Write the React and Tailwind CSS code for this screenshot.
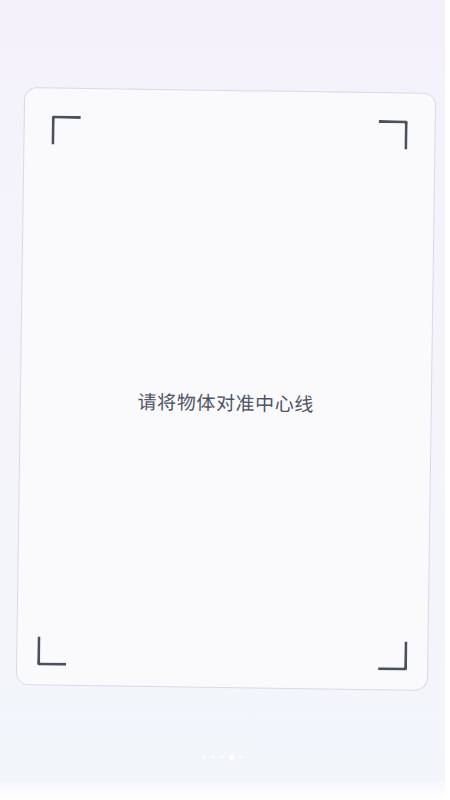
export default function App() {
  return (
    <div className="relative w-[450px] h-[800px] overflow-hidden bg-gradient-to-b from-[#f4f1fb] via-[#f5f4fb] to-[#f2f6fb] font-['Noto_Sans_CJK_SC','Noto_Sans',sans-serif]">
      <div className="flex flex-col h-full pr-[5px]">
        <div className="h-[90px]" />
        <div className="ml-[20px] w-[412px] h-[598px] rotate-[0.8deg] rounded-[13px] border border-[#d8dae6] bg-[#fafafd] flex flex-col">
          <div className="flex justify-between px-[27px] pt-[27px]">
            <div className="w-[29px] h-[29px] border-l-[3px] border-t-[3px] border-[#4b505d] rounded-tl-[3px]" />
            <div className="w-[29px] h-[29px] border-r-[3px] border-t-[3px] border-[#4b505d] rounded-tr-[3px]" />
          </div>
          <div className="flex-1 flex items-center justify-center pt-[16px]">
            <span className="text-[19px] leading-none text-[#4f5464] tracking-[0.6px]">请将物体对准中心线</span>
          </div>
          <div className="flex justify-between px-[20px] pb-[19px]">
            <div className="w-[29px] h-[29px] border-l-[3px] border-b-[3px] border-[#4b505d] rounded-bl-[3px]" />
            <div className="w-[29px] h-[29px] border-r-[3px] border-b-[3px] border-[#4b505d] rounded-br-[3px]" />
          </div>
        </div>
        <div className="flex-1 flex items-center justify-center gap-[5px] pt-[44px]">
          <span className="w-[4px] h-[4px] rounded-full bg-white/60" />
          <span className="w-[4px] h-[4px] rounded-full bg-white/60" />
          <span className="w-[4px] h-[4px] rounded-full bg-white/60" />
          <span className="w-[5px] h-[5px] rounded-full bg-white" />
          <span className="w-[4px] h-[4px] rounded-full bg-white/60" />
        </div>
        <div className="h-[18px] bg-gradient-to-b from-[#f6f8fc] to-white" />
      </div>
      <div className="absolute top-0 right-0 w-[5px] h-full bg-white" />
    </div>
  );
}
